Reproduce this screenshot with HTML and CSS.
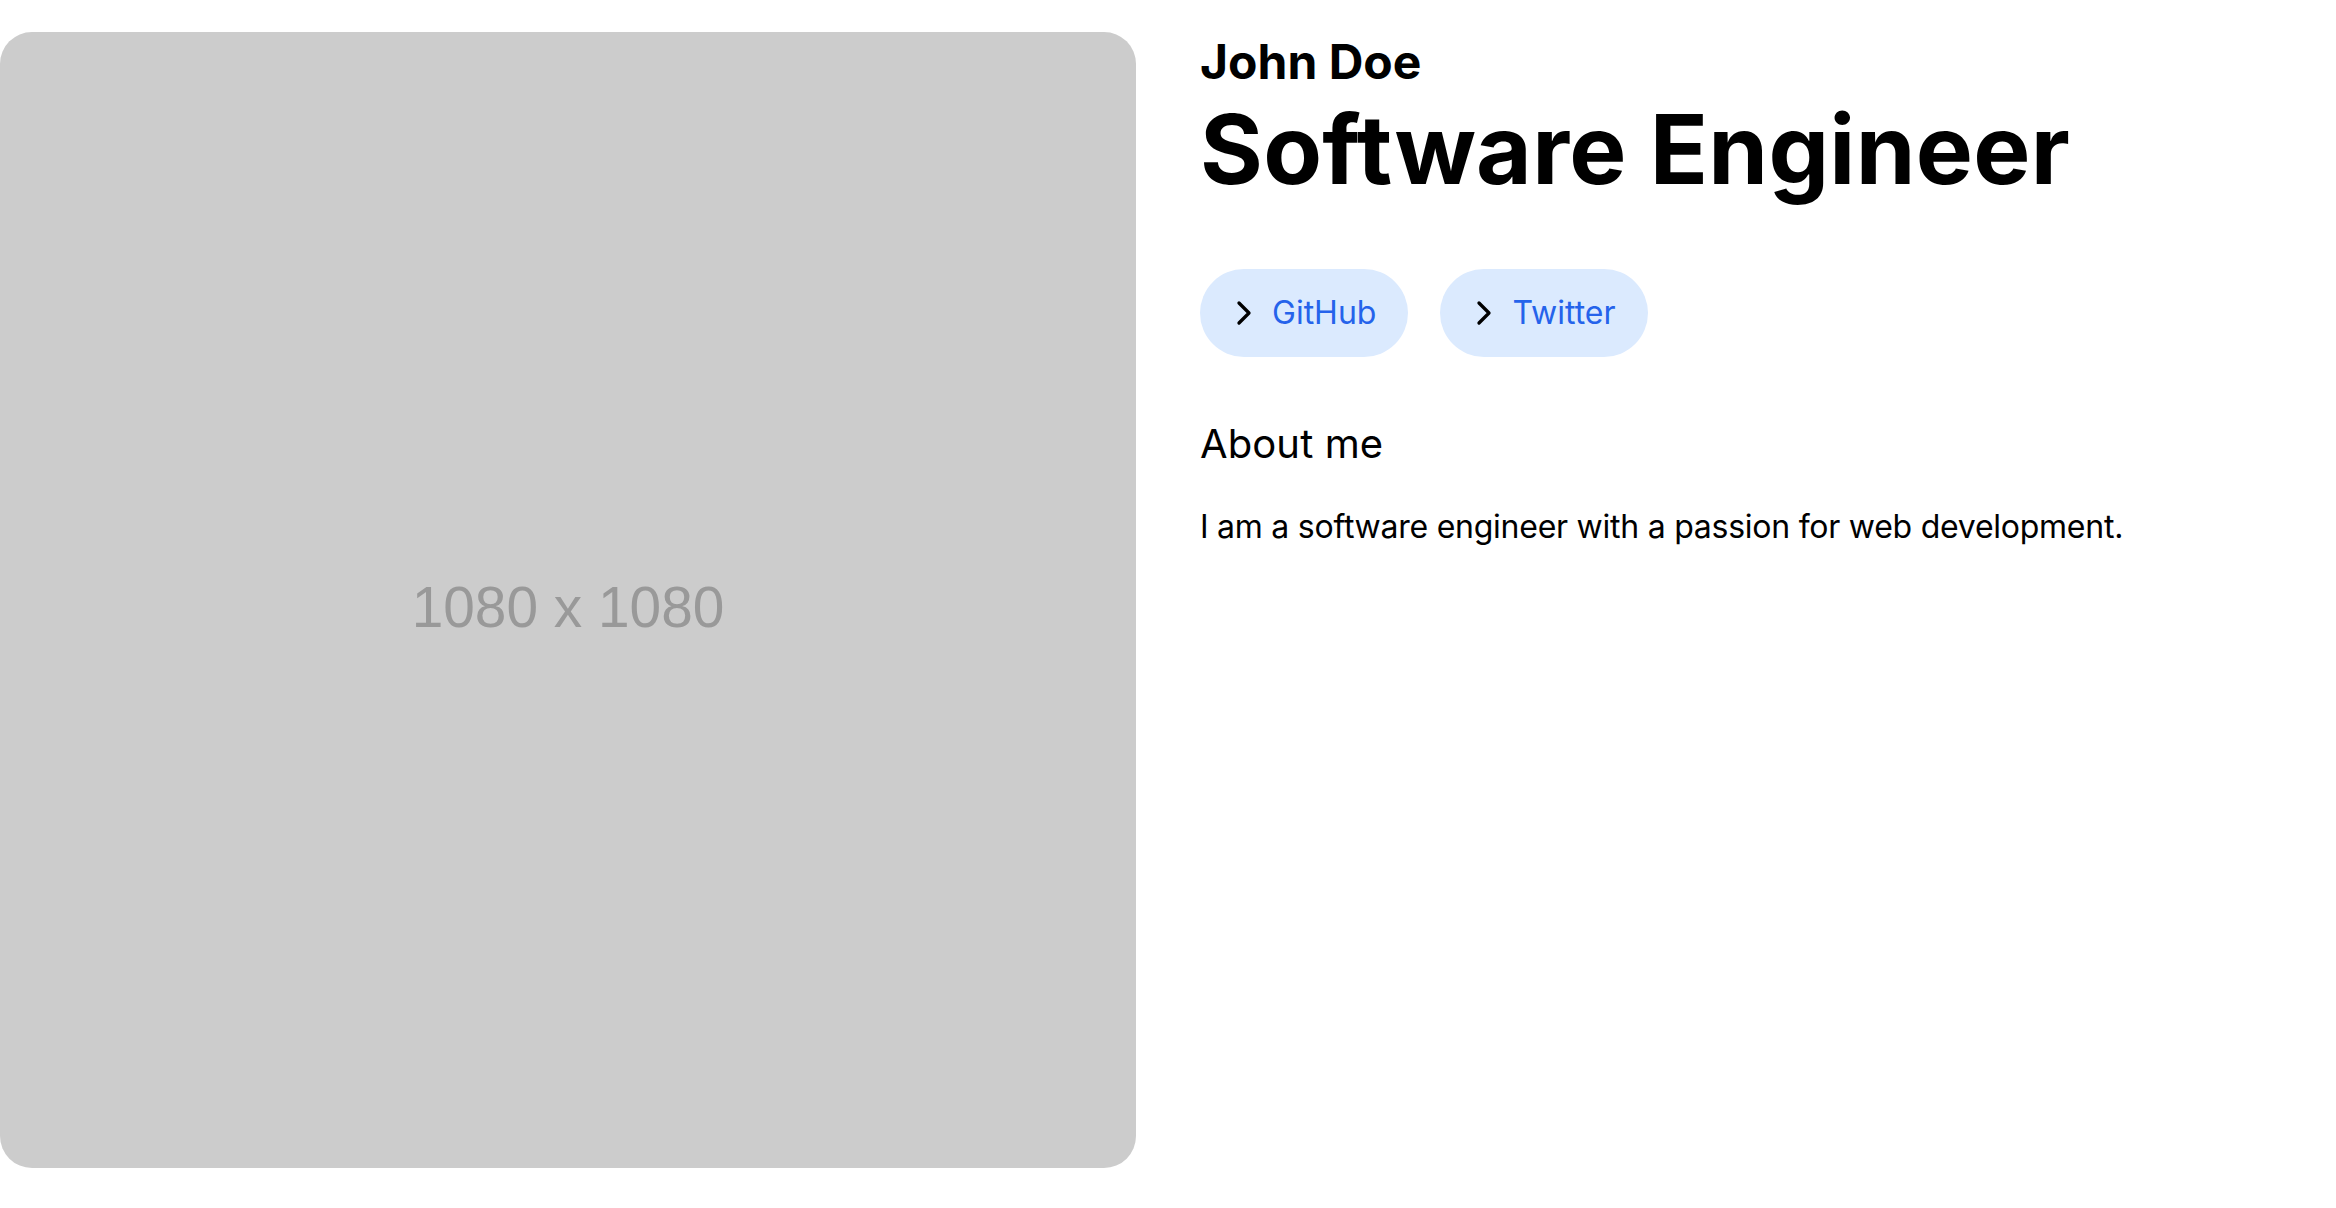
FILE: index.html
```html
<!DOCTYPE html>
<html lang="en">
<head>
<meta charset="utf-8">
<title>John Doe</title>
<link rel="stylesheet" href="styles.css">
</head>
<body>
<main class="page">
  <div class="photo"><span class="photo-label">1080 x 1080</span></div>
  <section class="info">
    <h1 class="name">John Doe</h1>
    <h2 class="title">Software Engineer</h2>
    <nav class="links">
      <a class="link" href="#"><svg class="chev" viewBox="0 0 24 24" fill="none" stroke="currentColor" stroke-width="2" stroke-linecap="round" stroke-linejoin="round"><path d="m9 18 6-6-6-6"/></svg><span>GitHub</span></a>
      <a class="link" href="#"><svg class="chev" viewBox="0 0 24 24" fill="none" stroke="currentColor" stroke-width="2" stroke-linecap="round" stroke-linejoin="round"><path d="m9 18 6-6-6-6"/></svg><span>Twitter</span></a>
    </nav>
    <h3 class="about">About me</h3>
    <p class="bio">I am a software engineer with a passion for web development.</p>
  </section>
</main>
</body>
</html>
```

FILE: styles.css
```css
html, body {
  margin: 0;
  padding: 0;
  background: #ffffff;
}

body {
  font-family: Inter, "Noto Sans", sans-serif;
  color: #000000;
}

.page {
  display: flex;
  gap: 64px;
  padding-top: 32px;
  align-items: flex-start;
}

.photo {
  flex: 1 1 0;
  aspect-ratio: 1 / 1;
  background: #cccccc;
  border-radius: 32px;
  display: flex;
  align-items: center;
  justify-content: center;
  font-family: "Liberation Sans", Arial, sans-serif;
  font-size: 56.8px;
  color: #999999;
}

.photo-label {
  padding-top: 14px;
}

.info {
  flex: 1 1 0;
  min-width: 0;
}

.name {
  margin: 0;
  font-size: 48px;
  font-weight: 700;
  line-height: normal;
}

.title {
  margin: 0;
  font-size: 96px;
  font-weight: 700;
  line-height: normal;
  letter-spacing: 0.3px;
}

.links {
  display: flex;
  gap: 32px;
  margin-top: 62px;
}

.link {
  display: inline-flex;
  align-items: center;
  gap: 8px;
  padding: 24px 32px 24px 24px;
  border-radius: 9999px;
  background: #dbeafe;
  color: #2563eb;
  font-size: 32px;
  line-height: 40px;
  text-decoration: none;
}

.chev {
  width: 40px;
  height: 40px;
  color: #000000;
  flex: none;
}

.about {
  margin: 62px 0 0;
  font-size: 40px;
  font-weight: 400;
  line-height: normal;
  letter-spacing: 0.1px;
}

.bio {
  margin: 39px 0 0;
  font-size: 32px;
  line-height: normal;
  letter-spacing: -0.25px;
}
```
